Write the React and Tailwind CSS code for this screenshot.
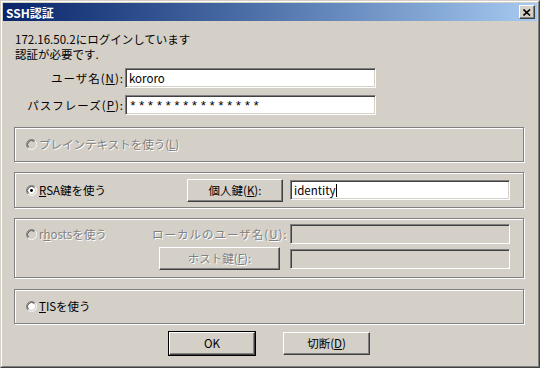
import React from 'react'

const FONT = "font-['Noto_Sans_CJK_JP','Noto_Sans',sans-serif]"

function Radio({ checked, disabled }) {
  return (
    <svg width="11" height="11" viewBox="0 0 12 12" className="shrink-0">
      <circle cx="6" cy="6" r="4.2" fill={disabled ? '#d4d0c8' : '#ffffff'} />
      <path d="M2.11 9.89 A5.5 5.5 0 0 1 9.89 2.11" fill="none" stroke="#808080" />
      <path d="M9.89 2.11 A5.5 5.5 0 0 1 2.11 9.89" fill="none" stroke="#ffffff" />
      <path d="M2.82 9.18 A4.5 4.5 0 0 1 9.18 2.82" fill="none" stroke="#404040" />
      <path d="M9.18 2.82 A4.5 4.5 0 0 1 2.82 9.18" fill="none" stroke="#d4d0c8" />
      {checked && <circle cx="6" cy="6" r="1.6" fill="#000" />}
    </svg>
  )
}

function Field({ children, disabled, className = '' }) {
  return (
    <div
      className={`h-[20px] border border-t-[#808080] border-l-[#808080] border-b-white border-r-white shadow-[inset_1px_1px_0_#404040,inset_-1px_-1px_0_#d4d0c8] flex items-center px-[3px] text-black ${
        disabled ? 'bg-[#d4d0c8]' : 'bg-white'
      } ${className}`}
    >
      {children}
    </div>
  )
}

function Button({ children, disabled, className = '' }) {
  return (
    <div
      className={`h-[23px] border border-t-white border-l-white border-b-[#404040] border-r-[#404040] shadow-[inset_-1px_-1px_0_#808080] bg-[#d4d0c8] flex items-center justify-center ${
        disabled ? 'text-[#808080] [text-shadow:1px_1px_0_#fff]' : 'text-black'
      } ${className}`}
    >
      {children}
    </div>
  )
}

function Group({ children, className = '' }) {
  return (
    <div
      className={`w-[510px] border border-[#808080] shadow-[inset_1px_1px_0_#fff,1px_1px_0_#fff] ${className}`}
    >
      {children}
    </div>
  )
}

const dim = 'text-[#808080] [text-shadow:1px_1px_0_#fff]'

export default function App() {
  return (
    <div className={`w-[540px] h-[368px] bg-[#d4d0c8] border border-t-[#d4d0c8] border-l-[#d4d0c8] border-r-[#404040] border-b-[#404040] text-[11.5px] leading-[13px] ${FONT}`}>
      <div className="h-full border border-t-white border-l-white border-r-[#808080] border-b-[#808080] p-px flex flex-col">
        {/* title bar */}
        <div className="h-[18px] bg-linear-to-r from-[#0a246a] to-[#a6caf0] flex items-center justify-between pl-[3px] pr-[2px]">
          <span className="text-white font-bold text-[12px]">SSH認証</span>
          <div className="w-[16px] h-[14px] border border-t-white border-l-white border-b-[#404040] border-r-[#404040] shadow-[inset_-1px_-1px_0_#808080] bg-[#d4d0c8] flex items-center justify-center">
            <svg width="8" height="7" viewBox="0 0 8 7">
              <path d="M0.5 0.5 L7 6.5 M7 0.5 L0.5 6.5" stroke="#000" strokeWidth="1.6" />
            </svg>
          </div>
        </div>

        {/* body */}
        <div className="flex flex-col pl-[11px]">
          <div className="pt-[11px] pl-px text-black leading-[15px]">
            <div>172.16.50.2にログインしています</div>
            <div>認証が必要です.</div>
          </div>

          <div className="mt-[6px] flex items-center">
            <div className="w-[110px] text-right text-black tracking-[1px]">
              ユーザ名(<span className="underline">N</span>):
            </div>
            <Field className="ml-px w-[251px]">kororo</Field>
          </div>
          <div className="mt-[7px] flex items-center">
            <div className="w-[110px] text-right text-black tracking-[1px]">
              パスフレーズ(<span className="underline">P</span>):
            </div>
            <Field className="ml-px w-[251px] font-['Liberation_Mono',monospace] text-[13px] tracking-[1px] pt-[3px]">
              ***************
            </Field>
          </div>

          <Group className="mt-[12px] h-[35px] flex items-center pl-[11px]">
            <Radio disabled />
            <span className={`ml-[2px] ${dim}`}>
              プレインテキストを使う(<span className="underline">L</span>)
            </span>
          </Group>

          <Group className="mt-[10px] h-[36px] flex items-center pl-[11px]">
            <div className="w-[161px] flex items-center">
              <Radio checked />
              <span className="ml-[2px] text-black">
                <span className="underline">R</span>SA鍵を使う
              </span>
            </div>
            <Button className="w-[96px]">
              個人鍵(<span className="underline">K</span>):
            </Button>
            <Field className="ml-[7px] w-[220px]">
              identity<span className="inline-block w-px h-[13px] bg-black" />
            </Field>
          </Group>

          <Group className="mt-[10px] h-[60px] flex flex-col pl-[11px] pt-[5px]">
            <div className="flex items-center">
              <div className="w-[126px] flex items-center">
                <Radio disabled />
                <span className={`ml-[2px] ${dim}`}>
                  r<span className="underline">h</span>ostsを使う
                </span>
              </div>
              <div className={`w-[136px] tracking-[1px] whitespace-nowrap ${dim}`}>
                ローカルのユーザ名(<span className="underline">U</span>):
              </div>
              <Field disabled className="ml-[2px] w-[220px]" />
            </div>
            <div className="mt-[3px] flex items-center">
              <Button disabled className="ml-[133px] w-[121px]">
                ホスト鍵(<span className="underline">F</span>):
              </Button>
              <Field disabled className="ml-[10px] w-[220px]" />
            </div>
          </Group>

          <Group className="mt-[11px] h-[35px] flex items-center pl-[11px]">
            <Radio />
            <span className="ml-[2px] text-black">
              <span className="underline">T</span>ISを使う
            </span>
          </Group>

          <div className="mt-[7px] flex items-center">
            <div className="ml-[154px] border border-black">
              <Button className="w-[86px] h-[21px]">OK</Button>
            </div>
            <Button className="ml-[27px] w-[87px]">
              切断(<span className="underline">D</span>)
            </Button>
          </div>
        </div>
      </div>
    </div>
  )
}
